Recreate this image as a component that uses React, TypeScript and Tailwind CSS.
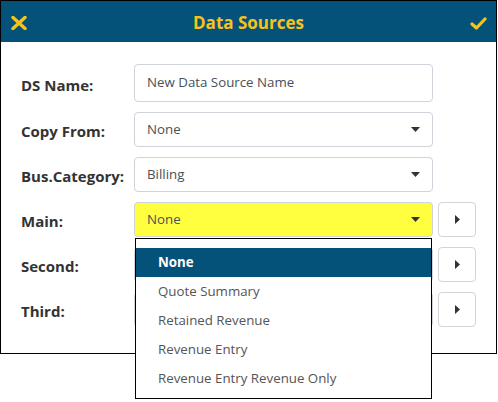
import { useState } from "react";

const FONT = { fontFamily: '"Open Sans", "Noto Sans", sans-serif' };

function CaretDown() {
  return (
    <svg width="9" height="5" viewBox="0 0 9 5" className="shrink-0">
      <path d="M0 0h9L4.5 5z" fill="#333" />
    </svg>
  );
}

function CaretRight() {
  return (
    <svg width="5" height="9" viewBox="0 0 5 9">
      <path d="M0 0v9l5-4.5z" fill="#333" />
    </svg>
  );
}

function SelectBox({ value, highlight }: { value: string; highlight?: boolean }) {
  return (
    <div
      className={`flex h-[35px] w-[299px] items-center justify-between rounded-[4px] border border-[#ced4da] pl-3 pr-3 text-[13.3px] text-[#495057] ${
        highlight ? "bg-[#ffff40]" : "bg-white"
      }`}
    >
      <span>{value}</span>
      <CaretDown />
    </div>
  );
}

function NavButton() {
  return (
    <button
      type="button"
      className="flex h-[35px] w-[38px] items-center justify-center rounded-[4px] border border-[#d4d4d4] bg-white"
    >
      <CaretRight />
    </button>
  );
}

function Row({ label, children }: { label: string; children: React.ReactNode }) {
  return (
    <div className="flex items-center">
      <div className="mt-[4px] w-[113px] text-[15px] font-bold text-[#333]">{label}</div>
      {children}
    </div>
  );
}

export default function App() {
  const [selected] = useState("None");
  const options = ["None", "Quote Summary", "Retained Revenue", "Revenue Entry", "Revenue Entry Revenue Only"];

  return (
    <div className="relative h-[402px] w-[498px] bg-white" style={FONT}>
      <div className="flex h-[354px] w-[497px] flex-col border border-black">
        {/* Header */}
        <div className="flex h-[41px] items-center justify-between bg-[#04527a] pl-[10px] pr-[9px] pt-[3px]">
          <svg width="16" height="14" viewBox="0 0 16 14">
            <path d="M2 1.5l12 11M14 1.5l-12 11" stroke="#f9c21a" strokeWidth="3.4" strokeLinecap="round" />
          </svg>
          <span className="text-[17px] font-bold text-[#f9c21a]">Data Sources</span>
          <svg width="17" height="13" viewBox="0 0 17 13">
            <path d="M2 7l4.5 4L15 2" fill="none" stroke="#f9c21a" strokeWidth="3.2" strokeLinecap="round" strokeLinejoin="round" />
          </svg>
        </div>

        {/* Form */}
        <div className="flex flex-col gap-[10px] pl-5 pt-[22px]">
          <Row label="DS Name:">
            <div className="flex h-[38px] w-[299px] items-center rounded-[4px] border border-[#ced4da] pl-3 text-[13.3px] text-[#495057]">
              New Data Source Name
            </div>
          </Row>
          <Row label="Copy From:">
            <SelectBox value="None" />
          </Row>
          <Row label="Bus.Category:">
            <SelectBox value="Billing" />
          </Row>
          <Row label="Main:">
            <div className="flex items-center gap-[5px]">
              <SelectBox value="None" highlight />
              <NavButton />
            </div>
          </Row>
          <Row label="Second:">
            <div className="flex items-center gap-[5px]">
              <SelectBox value="None" />
              <NavButton />
            </div>
          </Row>
          <Row label="Third:">
            <div className="flex items-center gap-[5px]">
              <SelectBox value="None" />
              <NavButton />
            </div>
          </Row>
        </div>
      </div>

      {/* Open dropdown list */}
      <div className="absolute left-[135px] top-[238px] flex h-[161px] w-[297px] flex-col border border-black bg-white pt-[9px] text-[13.3px]">
        {options.map((o) => (
          <div
            key={o}
            className={`flex h-[29px] shrink-0 items-center pl-[22px] ${
              o === selected ? "bg-[#04527a] font-bold text-white" : "text-[#555]"
            }`}
          >
            {o}
          </div>
        ))}
      </div>
    </div>
  );
}
